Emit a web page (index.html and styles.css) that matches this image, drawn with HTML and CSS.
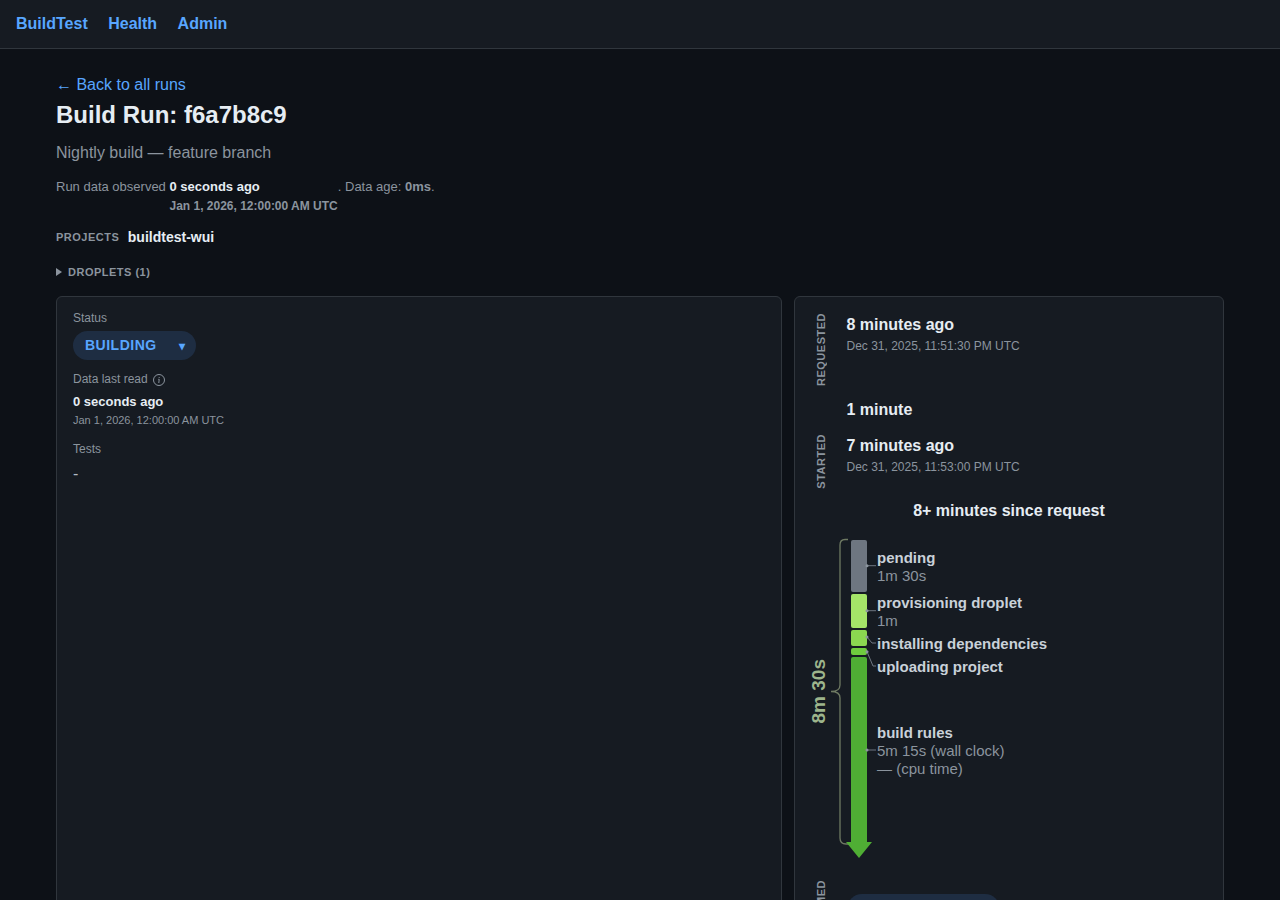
FILE: index.html
```html
<!DOCTYPE html>
<html lang="en">
<head>
<meta charset="utf-8">
<title>Build Run: f6a7b8c9</title>
<link rel="stylesheet" href="styles.css">
</head>
<body>
<nav class="nav">
  <a class="nav-link" href="#">BuildTest</a>
  <a class="nav-link" href="#">Health</a>
  <a class="nav-link" href="#">Admin</a>
</nav>
<main class="page">
  <a class="back" href="#">← Back to all runs</a>
  <h1 class="title">Build Run: f6a7b8c9</h1>
  <p class="subtitle">Nightly build — feature branch</p>
  <div class="observed">
    <span>Run data observed&nbsp;</span>
    <span class="observed-when"><strong class="bright">0 seconds ago</strong><strong class="observed-date">Jan 1, 2026, 12:00:00 AM UTC</strong></span>
    <span>. Data age: <strong>0ms</strong>.</span>
  </div>
  <div class="projects"><span class="caps">PROJECTS</span><span class="project-name">buildtest-wui</span></div>
  <div class="droplets"><span class="tri"></span><span class="caps">DROPLETS (1)</span></div>
  <div class="grid">
    <section class="card card-left">
      <div class="label">Status</div>
      <div class="status-pill"><span class="status-text">BUILDING</span><span class="caret">▾</span></div>
      <div class="label label-read">Data last read
        <svg class="info" viewBox="0 0 12 12" width="12" height="12"><circle cx="6" cy="6" r="5.5" fill="none" stroke="currentColor"/><path d="M6.2 3.1v.9M5.3 5.3h.9L5.8 9" fill="none" stroke="currentColor"/></svg>
      </div>
      <div class="read-value">0 seconds ago</div>
      <div class="read-date">Jan 1, 2026, 12:00:00 AM UTC</div>
      <div class="label label-tests">Tests</div>
      <div class="dash">-</div>
    </section>
    <section class="card card-right">
      <div class="event event-requested">
        <div class="vert"><span>REQUESTED</span></div>
        <div class="event-body"><div class="event-main">8 minutes ago</div><div class="event-date">Dec 31, 2025, 11:51:30 PM UTC</div></div>
      </div>
      <div class="gap-time">1 minute</div>
      <div class="event event-started">
        <div class="vert"><span>STARTED</span></div>
        <div class="event-body"><div class="event-main">7 minutes ago</div><div class="event-date">Dec 31, 2025, 11:53:00 PM UTC</div></div>
      </div>
      <div class="since">8+ minutes since request</div>
      <div class="diagram">
        <svg class="diagram-svg" width="100" height="330" viewBox="0 0 100 330">
          <path d="M46 9.5H43Q38 9.5 38 15V155Q38 161.500 29 161.500Q38 161.500 38 168V308Q38 314 44 314H47" fill="none" stroke="#6f7a63" stroke-width="1.3"/>
          <rect x="49" y="10" width="16" height="52" rx="2" fill="#6e7681"/>
          <rect x="49" y="64" width="16" height="34" rx="2" fill="#a5e468"/>
          <rect x="49" y="100" width="16" height="16" rx="2" fill="#8bd750"/>
          <rect x="49" y="118" width="16" height="7" rx="2" fill="#6fcb3e"/>
          <path d="M49 129Q49 127 51 127H63Q65 127 65 129V312H70L57 328L44 312H49Z" fill="#4fae34"/>
          <g fill="none" stroke="#6e7681" stroke-width="1">
            <path d="M65 35.700H74"/><path d="M65 80.700H74"/>
            <path d="M65 107L70 113H74"/><path d="M65 121.700L71 136H74"/>
            <path d="M65 220H74"/>
          </g>
          <g fill="#8b949e">
            <circle cx="65" cy="35.700" r="1.5"/><circle cx="65" cy="80.700" r="1.5"/>
            <circle cx="65" cy="107" r="1.500"/><circle cx="65" cy="121.700" r="1.5"/>
            <circle cx="65" cy="220" r="1.5"/>
          </g>
        </svg>
        <div class="total"><span>8m 30s</span></div>
        <div class="phase phase-pending"><b>pending</b><span>1m 30s</span></div>
        <div class="phase phase-prov"><b>provisioning droplet</b><span>1m</span></div>
        <div class="phase phase-install"><b>installing dependencies</b></div>
        <div class="phase phase-upload"><b>uploading project</b></div>
        <div class="phase phase-build"><b>build rules</b><span>5m 15s (wall clock)</span><span>— (cpu time)</span></div>
      </div>
      <div class="event event-claimed">
        <div class="vert"><span>CONFIRMED</span></div>
        <div class="finish-pill"></div>
      </div>
    </section>
  </div>
</main>
</body>
</html>
```
FILE: styles.css
```css
* { box-sizing: border-box; }
html, body { margin: 0; padding: 0; }
body {
  background: #0d1117;
  color: #e6edf3;
  font-family: "Liberation Sans", Arial, sans-serif;
  font-size: 14px;
}
a { text-decoration: none; color: #58a6ff; }
strong, b { font-weight: 700; }

.nav {
  display: flex;
  align-items: center;
  gap: 20.5px;
  height: 49px;
  padding: 0 16px;
  background: #161b22;
  border-bottom: 1px solid #30363d;
}
.nav-link { font-size: 16px; font-weight: 700; }

.page { padding: 27px 56px 0; }
.back { display: block; font-size: 16px; line-height: 18px; }
.title { margin: 3px 0 0; font-size: 24px; line-height: 36px; font-weight: 700; }
.subtitle { margin: 8px 0 0; font-size: 16px; line-height: 24px; color: #8b949e; }

.observed {
  display: flex;
  margin-top: 12px;
  font-size: 13px;
  line-height: 19px;
  color: #8b949e;
}
.observed-when { display: flex; flex-direction: column; }
.observed-date { margin-top: 1px; font-size: 12px; line-height: 19px; }
.bright { color: #e6edf3; }

.projects { display: flex; align-items: center; gap: 8.5px; margin-top: 11px; height: 20px; }
.caps { font-size: 11px; font-weight: 700; letter-spacing: 0.5px; color: #8b949e; }
.project-name { font-size: 14px; font-weight: 700; }

.droplets { display: flex; align-items: center; gap: 6px; margin-top: 15px; height: 20px; }
.tri {
  width: 0; height: 0;
  border-left: 6px solid #8b949e;
  border-top: 4px solid transparent;
  border-bottom: 4px solid transparent;
}

.grid {
  display: grid;
  grid-template-columns: 726px 430px;
  gap: 12px;
  margin-top: 14px;
}
.card {
  background: #161b22;
  border: 1px solid #30363d;
  border-radius: 6px;
  min-height: 760px;
}
.card-left { padding: 13px 16px; }
.label { font-size: 12px; line-height: 16px; color: #8b949e; }
.status-pill {
  display: flex;
  justify-content: space-between;
  align-items: center;
  width: 123px;
  height: 29px;
  margin-top: 5px;
  padding: 0 11px 0 12px;
  border-radius: 15px;
  background: #1e2d42;
  color: #58a6ff;
  font-size: 14px;
  font-weight: 700;
  letter-spacing: 0.5px;
}
.status-text { padding-bottom: 2px; }
.caret { font-size: 12px; }
.label-read { display: flex; align-items: center; gap: 5px; margin-top: 11px; }
.info { color: #8b949e; margin-top: 2px; }
.read-value { margin-top: 6px; font-size: 13px; line-height: 18px; font-weight: 700; }
.read-date { margin-top: 0; font-size: 11px; line-height: 18px; color: #8b949e; }
.label-tests { margin-top: 12px; }
.dash { margin-top: 8px; font-size: 16px; line-height: 18px; color: #b1bac4; }

.card-right { padding: 16px 16px 0; }
.event { display: flex; gap: 15.5px; }
.vert { width: 20px; display: flex; justify-content: center; }
.vert span {
  writing-mode: vertical-rl;
  transform: rotate(180deg);
  font-size: 11px;
  font-weight: 700;
  letter-spacing: 0.5px;
  color: #8b949e;
}
.event-body { padding-top: 1px; }
.event-main { font-size: 16px; line-height: 22px; font-weight: 700; }
.event-date { margin-top: 1px; font-size: 12px; line-height: 18px; color: #8b949e; }
.gap-time { margin: 13px 0 0 35.5px; font-size: 16px; line-height: 22px; font-weight: 700; }
.event-started { margin-top: 13px; }
.since { margin-top: 11px; text-align: center; font-size: 16px; line-height: 22px; font-weight: 700; }

.diagram { position: relative; height: 330px; margin: 8px 0 0 -9px; width: 400px; }
.diagram-svg { position: absolute; left: 0; top: 0; display: block; }
.total {
  position: absolute;
  left: 0;
  top: 0;
  width: 34px;
  height: 323px;
  display: flex;
  align-items: center;
  justify-content: center;
}
.total span {
  writing-mode: vertical-rl;
  transform: rotate(180deg);
  font-size: 19px;
  font-weight: 700;
  color: #9db58c;
}
.phase { position: absolute; left: 75px; display: flex; flex-direction: column; font-size: 15px; line-height: 18px; color: #8b949e; white-space: nowrap; }
.phase b { color: #c9d1d9; }
.phase-pending { top: 19px; }
.phase-prov { top: 64px; }
.phase-install { top: 105px; }
.phase-upload { top: 128px; }
.phase-build { top: 194px; }

.event-claimed { margin-top: 20px; }
.finish-pill { width: 153px; height: 30px; margin-top: 14px; border-radius: 15px; background: #1e2d42; }
```
